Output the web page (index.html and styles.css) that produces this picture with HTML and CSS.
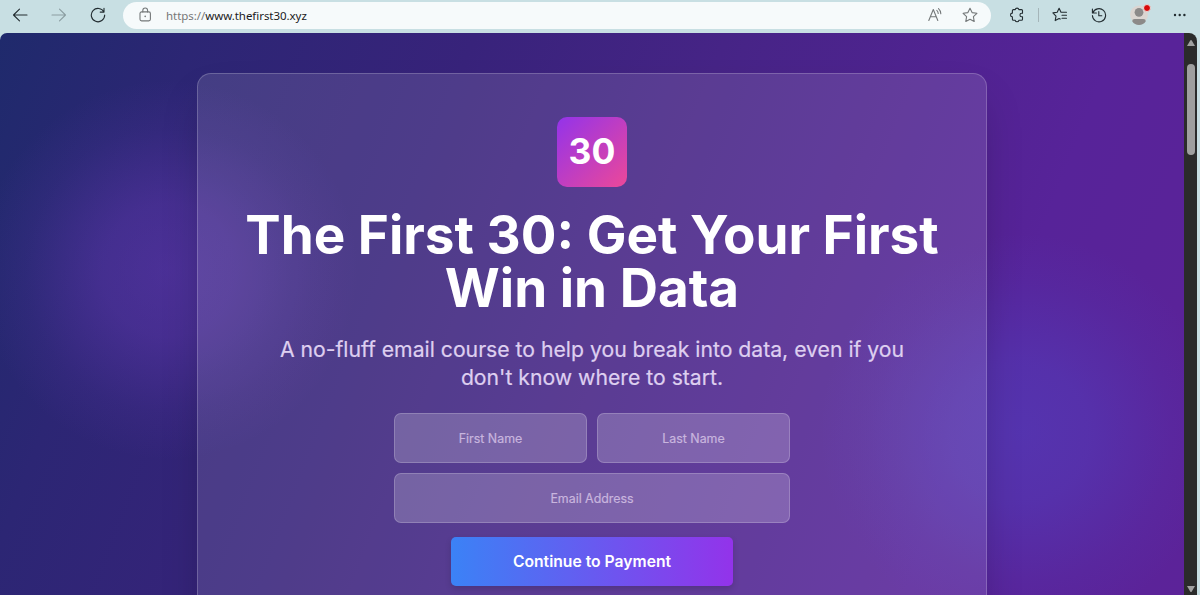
FILE: index.html
```
<!DOCTYPE html>
<html lang="en">
<head>
  <meta charset="UTF-8" />
  <title>The First 30</title>
  <link rel="stylesheet" href="styles.css">
</head>
<body>
  <header class="toolbar">
    <svg class="icon back" viewBox="0 0 16 16"><path d="M15 8H1.5M7.5 2.2L1.5 8l6 5.8"/></svg>
    <svg class="icon forward" viewBox="0 0 16 16"><path d="M1 8h13.5M8.5 2.2l6 5.8-6 5.8"/></svg>
    <svg class="icon reload" viewBox="0 0 16 16"><path d="M14 5.1A6.7 6.7 0 1 0 14.7 8M14 1.3v3.8h-3.8"/></svg>
    <div class="address">
      <svg class="icon lock" viewBox="0 0 16 16"><rect x="3" y="4.9" width="10.4" height="9" rx="1.6"/><path d="M5.8 4.9V3.4a2.4 2.4 0 0 1 4.8 0v1.5"/><circle class="dot" cx="8.2" cy="9.4" r=".8"/></svg>
      <span class="url"><span class="scheme">https://</span>www.thefirst30.xyz</span>
      <svg class="icon read" viewBox="0 0 16 16"><path d="M1.8 13.5L6.3 2.5l4.5 11M3.4 9.8h5.9M9.8 3.3a4 4 0 0 1 1.4 3.2M11.5 1.7a7 7 0 0 1 2.3 5"/></svg>
      <svg class="icon star" viewBox="0 0 16 16"><path d="M8 1.2l2.1 4.4 4.8.7-3.5 3.4.8 4.8L8 12.2l-4.2 2.3.8-4.8L1.1 6.3l4.8-.7z"/></svg>
    </div>
    <svg class="icon puzzle" viewBox="0 0 16 16"><path d="M4.4 2.6h1.8a1.9 1.9 0 0 1 3.7 0h2.6a1 1 0 0 1 1 1v2.6h-.8a1.7 1.7 0 0 0 0 3.5h.8v2.6a1 1 0 0 1-1 1H9.9a1.9 1.9 0 0 1-3.7 0H4.4a1 1 0 0 1-1-1V9.9a1.9 1.9 0 0 1 0-3.8V3.6a1 1 0 0 1 1-1z"/></svg>
    <span class="divider"></span>
    <svg class="icon favorites" viewBox="0 0 16 16"><path d="M8.2 12.1l-1.1-.6-3.9 2.1.8-4.5L.9 5.9l4.3-.6L7.1 1.3l1.9 4h5.5M10 8.3h4.5M10 11.3h4.5"/></svg>
    <svg class="icon history" viewBox="0 0 16 16"><path d="M1.4 2v4h4M1.8 6a6.6 6.6 0 1 1-.4 2.5M7.8 4.5v4.2h3"/></svg>
    <span class="profile">
      <svg viewBox="0 0 20 20"><circle class="disc" cx="10" cy="9.5" r="9"/><circle class="person" cx="10" cy="7.3" r="4.4"/><path class="person" d="M3.2 16.2Q3.2 14 5.6 14h8.8q2.4 0 2.4 2.2Q14.4 20 10 20t-6.8-3.8z"/></svg>
      <span class="alert"></span>
    </span>
    <svg class="icon more" viewBox="0 0 16 16"><circle cx="3" cy="8" r="1.2"/><circle cx="7.7" cy="8" r="1.2"/><circle cx="12.4" cy="8" r="1.2"/></svg>
  </header>

  <div class="window">
    <main class="page">
      <section class="card">
        <div class="logo">30</div>
        <h1>The First 30: Get Your First Win in Data</h1>
        <p class="lead">A no-fluff email course to help you break into data, even if you don't know where to start.</p>
        <form class="signup">
          <input type="text" placeholder="First Name">
          <input type="text" placeholder="Last Name">
          <input class="wide" type="email" placeholder="Email Address">
        </form>
        <button class="pay" type="button">Continue to Payment</button>
      </section>
    </main>
    <aside class="scrollbar">
      <svg class="arrow" viewBox="0 0 8 6"><path d="M3.2.6q.8-1 1.6 0L8 6H0z"/></svg>
      <span class="thumb"></span>
      <svg class="arrow down" viewBox="0 0 8 6"><path d="M0 0h8L4.8 5.4q-.8 1-1.6 0z"/></svg>
    </aside>
  </div>
</body>
</html>
```
FILE: styles.css
```
* { box-sizing: border-box; }
body {
  margin: 0;
  height: 595px;
  overflow: hidden;
  display: flex;
  flex-direction: column;
  background: #c8dfe3;
  font-family: Inter, "Liberation Sans", sans-serif;
}

/* Browser toolbar */
.toolbar {
  height: 33px;
  flex: none;
  display: flex;
  align-items: center;
  padding: 0 12px 3px;
}
.icon {
  width: 16px;
  height: 16px;
  flex: none;
  fill: none;
  stroke: #222c30;
  stroke-width: 1.1;
  stroke-linecap: round;
  stroke-linejoin: round;
}
.forward { margin-left: 23px; stroke: #8b9da1; }
.reload { margin-left: 23px; }
.address {
  width: 868px;
  height: 27px;
  margin-left: 17px;
  padding: 0 13px 0 14px;
  display: flex;
  align-items: center;
  border-radius: 14px;
  background: #f6fafb;
}
.address .icon { stroke: #747879; }
.address .dot { fill: #747879; stroke: none; }
.url {
  margin-left: 13px;
  flex: 1;
  font: 11.5px "Noto Sans", sans-serif;
  letter-spacing: -.05px;
  color: #1b1b1b;
}
.scheme { color: #777; }
.star { margin-left: 19px; }
.puzzle { margin-left: 18px; }
.divider {
  width: 1px;
  height: 14px;
  margin: 0 13px;
  background: #a5b5b9;
}
.history { margin-left: 23px; }
.profile {
  position: relative;
  width: 20px;
  height: 20px;
  margin-left: 22px;
}
.profile svg { display: block; width: 20px; height: 20px; }
.disc { fill: #dbd5d1; }
.person { fill: #8c8a89; }
.alert {
  position: absolute;
  top: -1px;
  right: -2px;
  width: 8px;
  height: 8px;
  border: 1px solid #ead9d7;
  border-radius: 50%;
  background: #d80909;
}
.more { margin-left: 23px; fill: #222c30; stroke: none; }

/* Page area */
.window {
  flex: 1;
  min-height: 0;
  display: flex;
  margin-right: 3px;
  border-radius: 7px 8px 0 0;
  overflow: hidden;
}
.page {
  flex: 1;
  padding-top: 40px;
  overflow: hidden;
  background:
    radial-gradient(circle 190px at 168px 237px, rgba(122, 66, 205, .38), rgba(122, 66, 205, .31) 35%, rgba(122, 66, 205, .09) 75%, transparent),
    radial-gradient(circle 200px at 1020px 400px, rgba(80, 75, 205, .42), rgba(80, 75, 205, .34) 35%, rgba(80, 75, 205, .1) 75%, transparent),
    linear-gradient(111deg, #1f2a6c 0%, #2c2674 14%, #38237b 34%, #462486 52%, #572399 80%, #5c2399 100%);
}
.card {
  width: 790px;
  height: 720px;
  margin: 0 auto;
  padding: 42.5px 43px 0;
  display: flex;
  flex-direction: column;
  align-items: center;
  text-align: center;
  border: 1px solid rgba(255, 255, 255, .2);
  border-radius: 14px;
  background: rgba(255, 255, 255, .115);
  box-shadow: 0 22px 44px -11px rgba(0, 0, 0, .25);
}
.logo {
  width: 70px;
  height: 70px;
  display: flex;
  align-items: center;
  justify-content: center;
  border-radius: 10px;
  background: linear-gradient(135deg, #9333ea, #ec4899);
  color: #fff;
  font-size: 35.5px;
  line-height: 36px;
  font-weight: 700;
}
h1 {
  margin: 22.5px 0 0;
  color: #fff;
  font-size: 53px;
  line-height: 53px;
  font-weight: 700;
}
.lead {
  width: 676px;
  margin: 20px 0 0;
  color: #decff0;
  font-size: 21.2px;
  line-height: 28px;
  -webkit-text-stroke: .2px #decff0;
}
.signup {
  width: 396px;
  margin-top: 22px;
  display: grid;
  grid-template-columns: 1fr 1fr;
  gap: 10px;
}
input {
  width: 100%;
  height: 50px;
  border: 1px solid rgba(255, 255, 255, .2);
  border-radius: 7px;
  background: rgba(255, 255, 255, .2);
  color: #fff;
  font: 12.4px Inter, sans-serif;
  text-align: center;
}
input::placeholder {
  color: #c8b5de;
  -webkit-text-stroke: .2px #c8b5de;
}
.wide { grid-column: span 2; }
.pay {
  width: 282px;
  height: 49px;
  margin-top: 14px;
  padding-bottom: 2px;
  border: none;
  border-radius: 5px;
  background: linear-gradient(90deg, #3b82f6, #9333ea);
  box-shadow: 0 3px 6px rgba(0, 0, 0, .15);
  color: #fff;
  font: 600 15.7px Inter, sans-serif;
  cursor: pointer;
}

/* Scrollbar */
.scrollbar {
  width: 13px;
  display: flex;
  flex-direction: column;
  align-items: center;
  padding: 7px 0 3px;
  background: #2b2b2b;
}
.arrow { width: 8px; height: 6px; fill: #a0a0a0; }
.thumb {
  width: 8px;
  height: 91px;
  margin-top: 18px;
  border-radius: 4px;
  background: #9f9f9f;
}
.down { margin-top: auto; }
```
